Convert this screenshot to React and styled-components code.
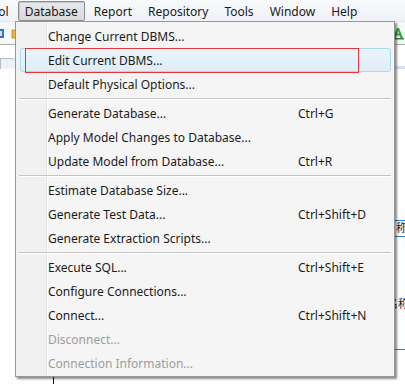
import React from "react";
import styled, { createGlobalStyle, css } from "styled-components";

// Global
const GlobalStyle = createGlobalStyle`
  html, body {
    margin: 0;
    padding: 0;
    background: #ffffff;
  }
  body {
    font-family: "Noto Sans", "Open Sans", sans-serif;
    font-size: 12px;
  }
`;

// Styles
const Page = styled.div`
  position: relative;
  width: 405px;
  height: 384px;
  overflow: hidden;
  display: flex;
  flex-direction: column;
  background: #ffffff;
`;

const MenuBar = styled.div`
  height: 22px;
  flex: none;
  display: flex;
  align-items: stretch;
  background: linear-gradient(#f9fafc, #eef1f6);
  border-bottom: 1px solid #e3e7ee;
  box-sizing: border-box;
  overflow: hidden;
`;

const MenuBarInner = styled.div`
  display: flex;
  align-items: stretch;
  margin-left: -40px;
  padding-top: 1px;
`;

const MenuTitle = styled.div`
  display: flex;
  align-items: center;
  padding: 0 6px;
  margin-right: 2px;
  color: #1a1a1a;
  border: 1px solid transparent;
  border-radius: 2px;
  box-sizing: border-box;
  height: 20px;
  white-space: nowrap;
  ${props => props.$open && css`
    border-color: #8d8e90;
    background: linear-gradient(#e8e9ea, #d7d9dc);
    box-shadow: inset 1px 1px 0 #c4c6c9;
  `}
`;

const Toolbar = styled.div`
  height: 22px;
  flex: none;
  display: flex;
  align-items: center;
  justify-content: space-between;
  background: #f6f7f9;
  border-bottom: 1px solid #a9adb3;
`;

const ToolGroup = styled.div`
  display: flex;
  align-items: center;
  gap: 6px;
  margin-left: ${props => props.$offset || 0}px;
`;

const TabStrip = styled.div`
  height: 24px;
  flex: none;
  display: flex;
  align-items: flex-end;
  justify-content: space-between;
  background: #ffffff;
`;

const Tab = styled.div`
  width: 16px;
  height: 10px;
  border: 1px solid #b7bcc3;
  border-bottom: none;
  border-radius: 0 6px 0 0;
  background: #eef2f7;
`;

const TabBand = styled.div`
  width: 12px;
  height: 5px;
  background: #d3e1f3;
  margin-bottom: -2px;
`;

const Canvas = styled.div`
  position: relative;
  flex: 1;
  background: #ffffff;
`;

const Connector = styled.div`
  position: absolute;
  left: 53px;
  top: 300px;
  width: 1px;
  height: 40px;
  background: #111111;
`;

const EntityBox = styled.div`
  position: absolute;
  left: 394px;
  top: 151px;
  width: 40px;
  height: 128px;
  border: 1px solid #2f7fd0;
  background: linear-gradient(90deg, #ffffff, #e9f1fb);
  font-family: "Noto Sans CJK SC", sans-serif;
  font-size: 11px;
  color: #111;
`;

const EntityTitle = styled.div`
  height: 15px;
  line-height: 12px;
  border-bottom: 1px solid #2f7fd0;
  background: #ffffff;
  padding-left: 1px;
`;

const EntityRow = styled.div`
  margin-top: 58px;
  margin-left: -8px;
`;

const Popup = styled.div`
  position: absolute;
  left: 15px;
  top: 21px;
  width: 380px;
  box-sizing: border-box;
  border: 1px solid #979797;
  padding: 2px 2px 1px 2px;
  box-shadow: 2px 2px 2px rgba(0, 0, 0, 0.45);
  background:
    linear-gradient(90deg,
      #f1f1f1 0, #f1f1f1 30px,
      #e2e3e3 30px, #e2e3e3 31px,
      #ffffff 31px, #ffffff 32px,
      #f5f5f5 32px);
  color: #1b1b1b;
  z-index: 5;
`;

const Item = styled.div`
  position: relative;
  height: 24px;
  display: grid;
  grid-template-columns: 249px 1fr;
  align-items: center;
  padding-left: 31px;
  margin: 0 1px 0 2px;
  box-sizing: border-box;
  border: 1px solid transparent;
  border-radius: 3px;
  white-space: nowrap;
  color: ${props => (props.$disabled ? "#9d9d9d" : "#1b1b1b")};
  ${props => props.$hover && css`
    border-color: #a9d9f0;
    background: linear-gradient(#eaf4fb, #dfedf8);
  `}
`;

const Label = styled.span`
  margin-left: -4px;
`;

const Shortcut = styled.span`
  margin-left: -3px;
`;

const Separator = styled.div`
  height: 5px;
  margin: 0 1px;
  display: flex;
  flex-direction: column;
  justify-content: center;
  &::before {
    content: "";
    display: block;
    height: 1px;
    background: #c4c4c4;
  }
  &::after {
    content: "";
    display: block;
    height: 1px;
    background: #ffffff;
  }
`;

const Annotation = styled.div`
  position: absolute;
  left: 4px;
  top: -1px;
  width: 334px;
  height: 25px;
  box-sizing: border-box;
  border: 1.5px solid #e8353a;
  pointer-events: none;
`;

// Data
const titles = ["Symbol", "Database", "Report", "Repository", "Tools", "Window", "Help"];

const groups = [
  [
    { label: "Change Current DBMS..." },
    { label: "Edit Current DBMS...", hover: true, marked: true },
    { label: "Default Physical Options..." },
  ],
  [
    { label: "Generate Database...", key: "Ctrl+G" },
    { label: "Apply Model Changes to Database..." },
    { label: "Update Model from Database...", key: "Ctrl+R" },
  ],
  [
    { label: "Estimate Database Size..." },
    { label: "Generate Test Data...", key: "Ctrl+Shift+D" },
    { label: "Generate Extraction Scripts..." },
  ],
  [
    { label: "Execute SQL...", key: "Ctrl+Shift+E" },
    { label: "Configure Connections..." },
    { label: "Connect...", key: "Ctrl+Shift+N" },
    { label: "Disconnect...", disabled: true },
    { label: "Connection Information...", disabled: true },
  ],
];

const ToolIcon = ({ kind }) => {
  if (kind === "db") {
    return (
      <svg width="12" height="12" viewBox="0 0 12 12">
        <rect x="1" y="2" width="10" height="9" fill="#3b73c4" />
        <rect x="3" y="4" width="6" height="5" fill="#cfe0f7" />
      </svg>
    );
  }
  if (kind === "folder") {
    return (
      <svg width="12" height="12" viewBox="0 0 12 12">
        <path d="M1 3h4l1 1h5v7H1z" fill="#e8b93a" stroke="#b98a1c" strokeWidth="0.8" />
      </svg>
    );
  }
  return (
    <svg width="14" height="14" viewBox="0 0 14 14">
      <path d="M2 12L6 2h2l4 10h-2.5l-1-2.6h-3L4.5 12z" fill="#3aa33a" />
      <path d="M6.3 7.4h1.6L7.1 5z" fill="#ffffff" />
      <rect x="1" y="12" width="12" height="1.5" fill="#2f8a2f" />
    </svg>
  );
};

const App = () => {
  return (
    <>
      <GlobalStyle />
      <Page>
        <MenuBar>
          <MenuBarInner>
            {titles.map(t => (
              <MenuTitle key={t} $open={t === "Database"}>{t}</MenuTitle>
            ))}
          </MenuBarInner>
        </MenuBar>
        <Toolbar>
          <ToolGroup $offset={-7}>
            <ToolIcon kind="db" />
            <ToolIcon kind="folder" />
          </ToolGroup>
          <ToolGroup>
            <ToolIcon kind="font" />
          </ToolGroup>
        </Toolbar>
        <TabStrip>
          <Tab />
          <TabBand />
        </TabStrip>
        <Canvas>
          <Connector />
          <EntityBox>
            <EntityTitle>称</EntityTitle>
            <EntityRow>名称</EntityRow>
          </EntityBox>
        </Canvas>

        <Popup>
          {groups.map((group, gi) => (
            <React.Fragment key={gi}>
              {gi > 0 && <Separator />}
              {group.map(item => (
                <Item key={item.label} $hover={item.hover} $disabled={item.disabled}>
                  <Label>{item.label}</Label>
                  <Shortcut>{item.key}</Shortcut>
                  {item.marked && <Annotation />}
                </Item>
              ))}
            </React.Fragment>
          ))}
        </Popup>
      </Page>
    </>
  );
};

export default App;
